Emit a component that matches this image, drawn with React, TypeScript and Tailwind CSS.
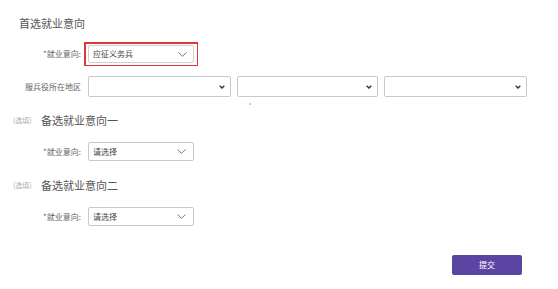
import React from 'react';

const Chevron = ({ bold = false }: { bold?: boolean }) =>
  bold ? (
    <svg width="6" height="4" viewBox="0 0 6 4" className="shrink-0">
      <path d="M0.7 0.7 L3 3 L5.3 0.7" fill="none" stroke="#333" strokeWidth="1.4" />
    </svg>
  ) : (
    <svg width="9" height="5" viewBox="0 0 9 5" className="shrink-0">
      <path d="M0.5 0.5 L4.5 4.3 L8.5 0.5" fill="none" stroke="#777" strokeWidth="1" />
    </svg>
  );

const Select = ({ text, className }: { text?: string; className: string }) => (
  <div
    className={`flex items-center justify-between border border-[#c9c9c9] rounded-[2px] bg-white pl-[4px] ${className}`}
  >
    <span className="text-[8px] text-[#444] leading-none">{text}</span>
    <Chevron />
  </div>
);

const Section = ({ title }: { title: string }) => (
  <div className="flex items-center h-[14px] pl-[13px]">
    <span className="text-[7px] text-[#aaa] w-[28px]">(选填)</span>
    <span className="text-[11px] text-[#555] leading-[14px]">{title}</span>
  </div>
);

const Label = ({ children }: { children: React.ReactNode }) => (
  <div className="w-[82px] pr-[1px] text-right text-[8px] text-[#666] leading-none">{children}</div>
);

export default function App() {
  return (
    <div className="w-[558px] h-[289px] bg-white relative flex flex-col pt-[16px] font-['Noto_Sans_CJK_SC','Noto_Sans',sans-serif]">
      <div className="pl-[19px] h-[14px] text-[11px] leading-[14px] text-[#555]">首选就业意向</div>

      <div className="flex items-center mt-[12px] h-[24px]">
        <Label>*就业意向:</Label>
        <div className="ml-[2px] w-[114px] h-[24px] shrink-0 bg-[#e0353c] p-[1.5px]">
          <div className="w-full h-full bg-white flex items-center justify-center">
            <div className="flex items-center justify-between w-[106px] h-[18px] border border-[#d0d0d0] rounded-[2px] pl-[4px] pr-[6px]">
              <span className="text-[8px] text-[#444] leading-none">应征义务兵</span>
              <Chevron />
            </div>
          </div>
        </div>
      </div>

      <div className="flex items-center mt-[10px] h-[21px]">
        <Label>服兵役所在地区</Label>
        <div className="ml-[6px] flex gap-[6px]">
          {[143, 141, 143].map((w, i) => (
            <div
              key={i}
              style={{ width: w }}
              className="h-[21px] flex items-center justify-end pr-[5px] border border-[#c9c9c9] rounded-[2px]"
            >
              <Chevron bold />
            </div>
          ))}
        </div>
      </div>

      <div className="mt-[16px]">
        <Section title="备选就业意向一" />
      </div>
      <div className="flex items-center mt-[15px] h-[19px]">
        <Label>*就业意向:</Label>
        <Select text="请选择" className="ml-[6px] w-[106px] h-[19px] pr-[7px]" />
      </div>

      <div className="mt-[17px]">
        <Section title="备选就业意向二" />
      </div>
      <div className="flex items-center mt-[15px] h-[19px]">
        <Label>*就业意向:</Label>
        <Select text="请选择" className="ml-[6px] w-[106px] h-[19px] pr-[7px]" />
      </div>

      <div className="flex justify-end pr-[36px] mt-[29px]">
        <button className="w-[70px] h-[20px] rounded-[2px] bg-[#5b45a3] text-white text-[8px] leading-none">
          提交
        </button>
      </div>

      <span className="absolute left-[249px] top-[103px] w-[2px] h-[2px] bg-[#bbb] rounded-full" />
    </div>
  );
}
